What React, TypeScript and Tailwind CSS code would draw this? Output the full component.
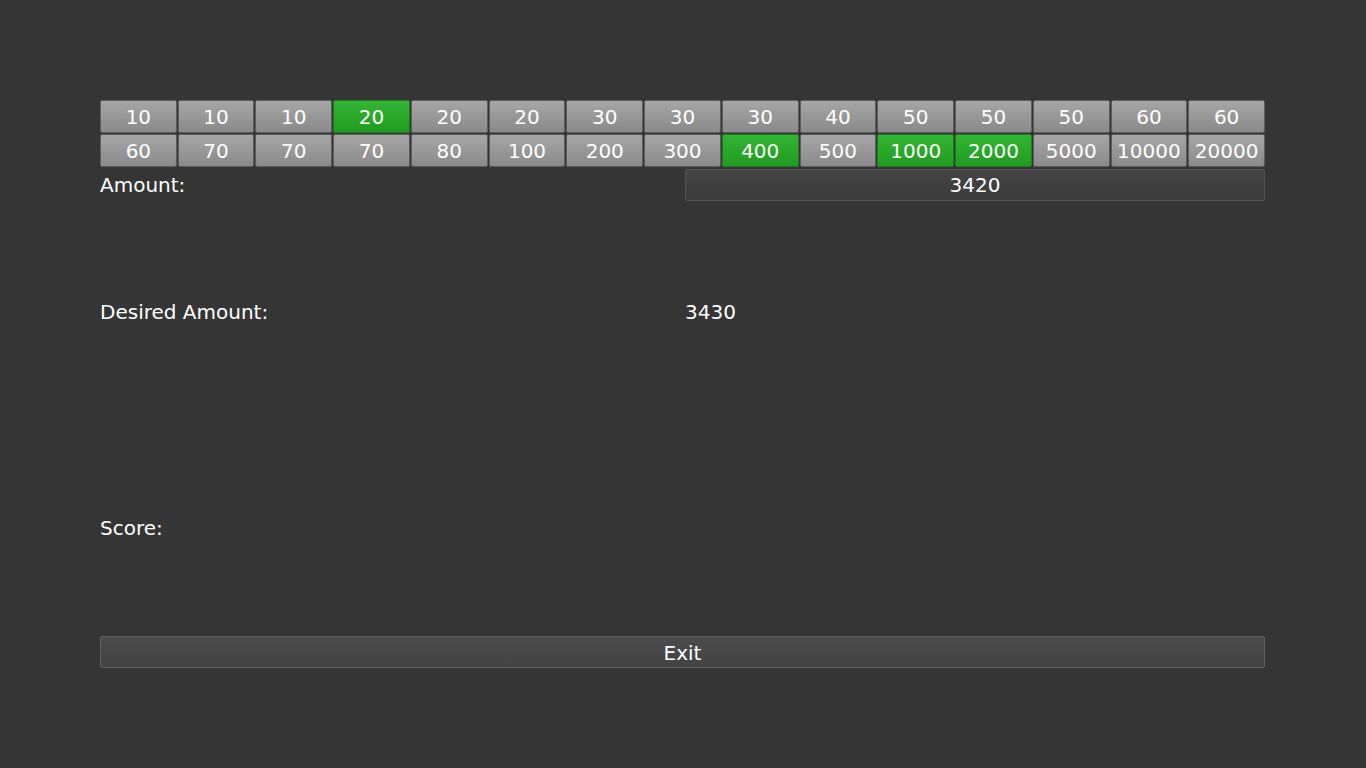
import React from "react";

const row1 = ["10","10","10","20","20","20","30","30","30","40","50","50","50","60","60"];
const row2 = ["60","70","70","70","80","100","200","300","400","500","1000","2000","5000","10000","20000"];
const green1 = new Set([3]);
const green2 = new Set([8, 10, 11]);

function Coin({ label, on }: { label: string; on: boolean }) {
  return (
    <div
      className={
        on
          ? "h-[33px] flex items-center justify-center pt-[1px] rounded-[2px] border border-[#1f7f1f] bg-gradient-to-b from-[#33b433] to-[#209c20] text-white"
          : "h-[33px] flex items-center justify-center pt-[1px] rounded-[2px] border border-[#5e5e5e] bg-gradient-to-b from-[#a6a6a6] to-[#8a8a8a] text-white"
      }
    >
      {label}
    </div>
  );
}

export default function App() {
  return (
    <div
      className="min-h-[768px] w-full bg-[#353535] text-white text-[20px] pt-[100px] px-[100px]"
      style={{ fontFamily: '"DejaVu Sans", Verdana, sans-serif' }}
    >
      <div className="w-[1165px]">
        <div className="grid grid-cols-[repeat(15,1fr)] gap-x-[1px] gap-y-[1px]">
          {row1.map((l, i) => (
            <Coin key={"a" + i} label={l} on={green1.has(i)} />
          ))}
          {row2.map((l, i) => (
            <Coin key={"b" + i} label={l} on={green2.has(i)} />
          ))}
        </div>
        <div className="flex h-[33px] items-center mt-[1px] pt-[1px]">
          <div className="w-[585px]">Amount:</div>
          <div className="flex-1 h-[32px] flex items-center justify-center rounded-[2px] border border-[#525252] bg-gradient-to-b from-[#454545] to-[#3b3b3b]">
            3420
          </div>
        </div>
        <div className="flex h-[32px] items-center mt-[94px] pt-[1px]">
          <div className="w-[585px]">Desired Amount:</div>
          <div className="flex-1">3430</div>
        </div>
        <div className="flex h-[32px] items-center mt-[184px] pt-[1px]">
          <div className="w-[585px]">Score:</div>
          <div className="flex-1"></div>
        </div>
        <div className="mt-[93px] h-[32px] flex items-center justify-center pt-[1px] rounded-[2px] border border-[#616161] bg-gradient-to-b from-[#4b4b4b] to-[#434343]">
          Exit
        </div>
      </div>
    </div>
  );
}
